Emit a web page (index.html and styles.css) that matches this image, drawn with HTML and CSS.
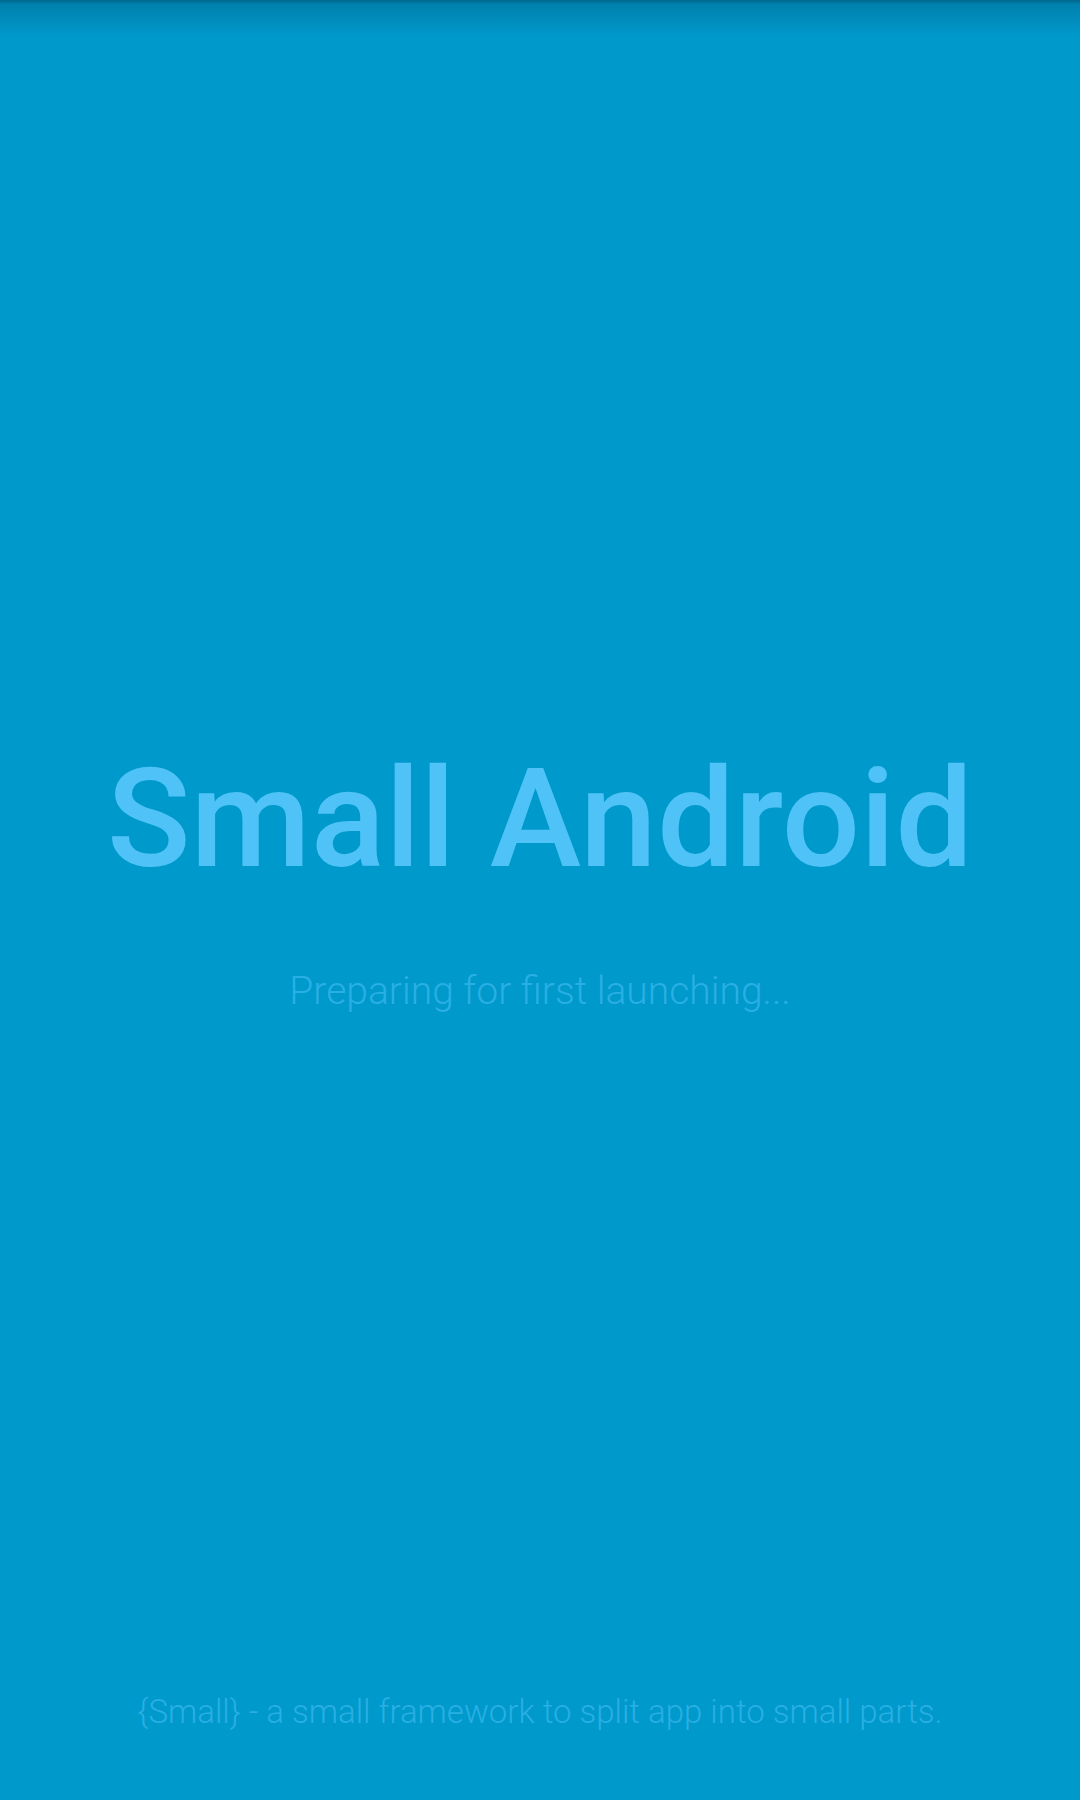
FILE: index.html
```html
<!DOCTYPE html>
<html lang="en">
<head>
<meta charset="utf-8">
<title>Small Android</title>
<link rel="stylesheet" href="styles.css">
</head>
<body>
<div class="screen">
  <div class="status-shade"></div>
  <main class="launch">
    <h1 class="title">Small Android</h1>
    <p class="subtitle">Preparing for first launching...</p>
  </main>
  <footer class="footer">{Small} - a small framework to split app into small parts.</footer>
</div>
</body>
</html>
```

FILE: styles.css
```css
html, body {
  margin: 0;
  padding: 0;
  background: #0099cc;
}

.screen {
  position: relative;
  width: 1080px;
  height: 1800px;
  background: #0099cc;
  display: flex;
  flex-direction: column;
  align-items: center;
  font-family: Roboto, "Noto Sans", "Liberation Sans", sans-serif;
  overflow: hidden;
}

.status-shade {
  position: absolute;
  top: 0;
  left: 0;
  right: 0;
  height: 36px;
  background: linear-gradient(to bottom, rgba(0, 40, 60, 0.45) 0px, rgba(0, 40, 60, 0.3) 3px, rgba(0, 40, 60, 0.22) 4px, rgba(0, 40, 60, 0) 36px);
}

.launch {
  padding-top: 750px;
  display: flex;
  flex-direction: column;
  align-items: center;
}

.title {
  margin: 0;
  font-size: 138px;
  line-height: 1;
  font-weight: 500;
  color: #4fc3f7;
  white-space: nowrap;
}

.subtitle {
  margin: 84px 0 0;
  font-size: 39px;
  line-height: 1;
  font-weight: 300;
  color: #2aafe3;
}

.footer {
  margin-top: auto;
  padding-bottom: 72px;
  font-size: 33px;
  line-height: 1;
  font-weight: 300;
  color: #2aafe3;
}
```
